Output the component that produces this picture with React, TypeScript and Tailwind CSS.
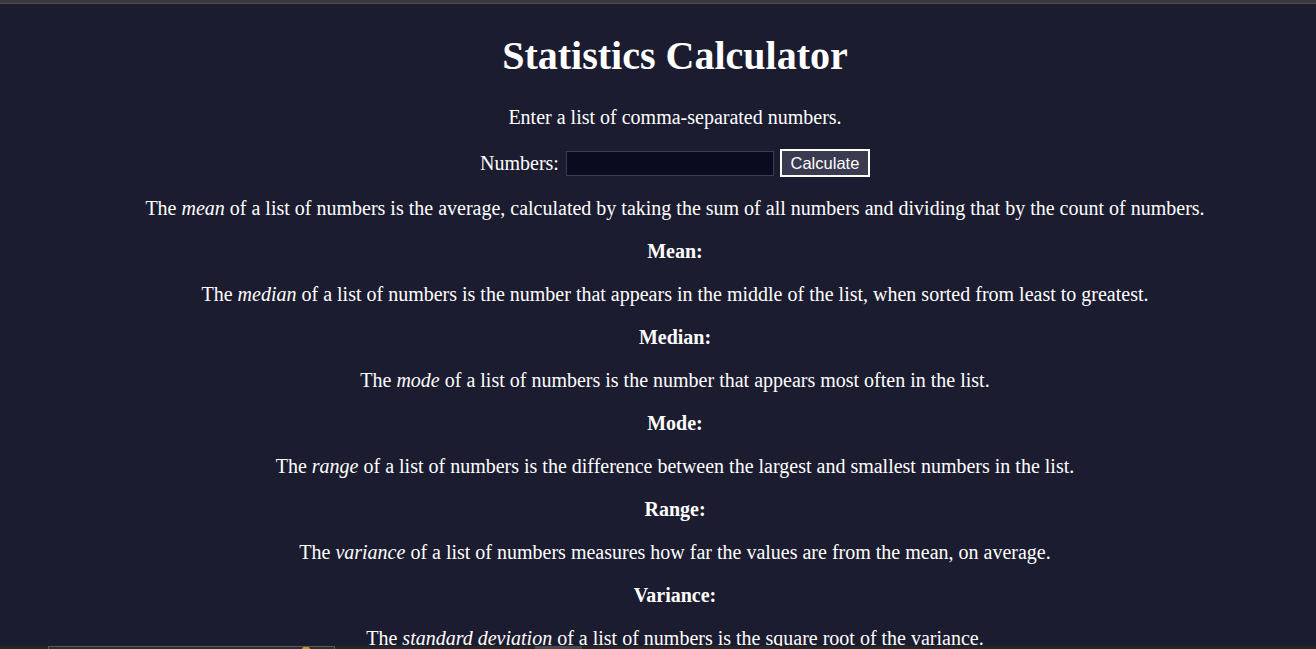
import React from "react";

const defs: { term: string; pre: string; post: string; label: string }[] = [
  { pre: "The ", term: "mean", post: " of a list of numbers is the average, calculated by taking the sum of all numbers and dividing that by the count of numbers.", label: "Mean:" },
  { pre: "The ", term: "median", post: " of a list of numbers is the number that appears in the middle of the list, when sorted from least to greatest.", label: "Median:" },
  { pre: "The ", term: "mode", post: " of a list of numbers is the number that appears most often in the list.", label: "Mode:" },
  { pre: "The ", term: "range", post: " of a list of numbers is the difference between the largest and smallest numbers in the list.", label: "Range:" },
  { pre: "The ", term: "variance", post: " of a list of numbers measures how far the values are from the mean, on average.", label: "Variance:" },
  { pre: "The ", term: "standard deviation", post: " of a list of numbers is the square root of the variance.", label: "Standard Deviation:" },
];

export default function App() {
  return (
    <div
      className="min-h-screen bg-[#1c1c30] text-white text-[20px] leading-[23px]"
      style={{ fontFamily: '"Liberation Serif", "Times New Roman", serif' }}
    >
      <div className="h-[4px] bg-[#3a3a3a] border-b border-[#4e4e4e]" />
      <div className="pl-[34px] text-center flex flex-col items-center">
        <h1 className="text-[40px] leading-[46px] font-bold mt-[29px] mb-[27px]">Statistics Calculator</h1>
        <p className="mb-[20px]">Enter a list of comma-separated numbers.</p>
        <form className="flex items-center justify-center mb-[20px]" onSubmit={(e) => e.preventDefault()}>
          <label htmlFor="numbers">Numbers:</label>
          <input
            id="numbers"
            type="text"
            className="ml-[7px] w-[208px] h-[25px] bg-[#0b0b1f] border border-[#3c3c52] outline-none text-white"
          />
          <button
            type="submit"
            className="ml-[6px] w-[90px] h-[28px] bg-[#3a3a50] border-2 border-white text-[16.5px] leading-none text-white"
            style={{ fontFamily: '"Liberation Sans", Arial, sans-serif' }}
          >
            Calculate
          </button>
        </form>
        {defs.map((d) => (
          <React.Fragment key={d.label}>
            <p className="mb-[20px]">
              {d.pre}
              <em>{d.term}</em>
              {d.post}
            </p>
            <p className="mb-[20px]">
              <strong>{d.label}</strong> <span></span>
            </p>
          </React.Fragment>
        ))}
      </div>
      <div className="fixed bottom-0 left-0 right-0 h-[3px] bg-[#262626]">
        <div className="absolute left-[48px] top-0 w-[287px] h-[3px] border-t border-l border-r border-[#5a5a5a] bg-[#2e2e2e]">
          <div className="absolute left-[253px] top-0 w-[8px] h-[2px] rounded-t-full bg-[#c8962e]" />
        </div>
        <div className="absolute left-[535px] top-0 w-[47px] h-[3px] bg-[#4a4a4a]" />
      </div>
    </div>
  );
}
